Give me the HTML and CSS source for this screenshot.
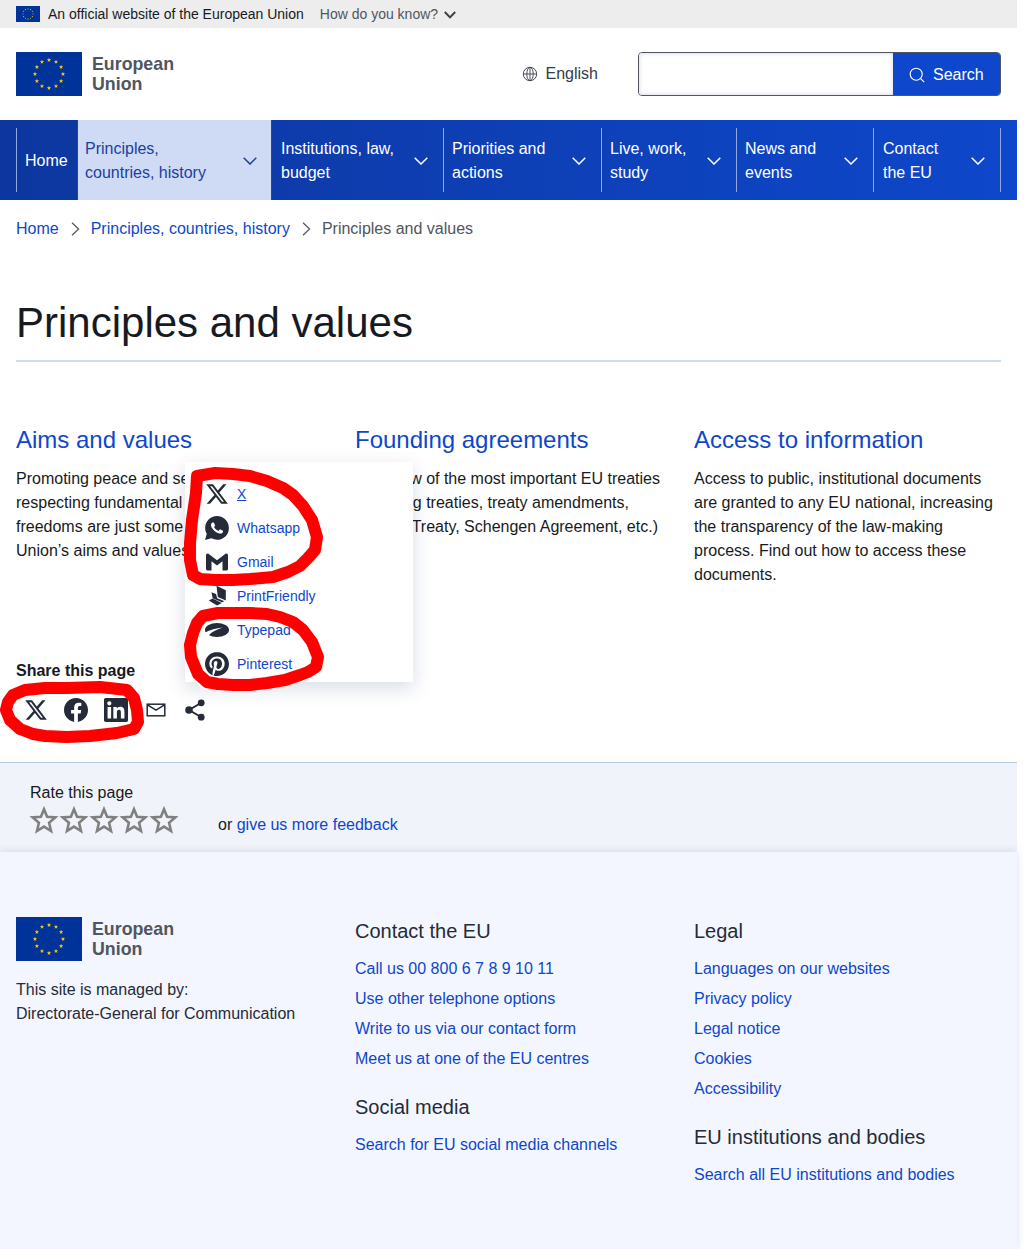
FILE: index.html
```html
<!DOCTYPE html>
<html lang="en">
<head>
<meta charset="utf-8">
<title>Principles and values</title>
<link rel="stylesheet" href="styles.css">
</head>
<body>
<svg class="defs" aria-hidden="true">
  <defs>
    <polygon id="st" points="0,-2.3 .55,-.72 2.2,-.72 .88,.28 1.36,1.88 0,.92 -1.36,1.88 -.88,.28 -2.2,-.72 -.55,-.72"/>
    <symbol id="flag" viewBox="0 0 66 44">
      <rect width="66" height="44" fill="#003399"/>
      <g fill="#ffcc00">
        <use href="#st" x="33" y="8"/><use href="#st" x="40" y="9.9"/><use href="#st" x="45.1" y="15"/><use href="#st" x="47" y="22"/>
        <use href="#st" x="45.1" y="29"/><use href="#st" x="40" y="34.1"/><use href="#st" x="33" y="36"/><use href="#st" x="26" y="34.1"/>
        <use href="#st" x="20.9" y="29"/><use href="#st" x="19" y="22"/><use href="#st" x="20.9" y="15"/><use href="#st" x="26" y="9.9"/>
      </g>
    </symbol>
    <symbol id="chev" viewBox="0 0 14 8"><path d="M.7.7 7 7 13.3.7" fill="none" stroke="currentColor" stroke-width="1.5"/></symbol>
    <symbol id="x" viewBox="0 0 24 24"><path d="M18.244 2.25h3.308l-7.227 8.26 8.502 11.24H16.17l-5.214-6.817L4.99 21.75H1.68l7.73-8.835L1.254 2.25H8.08l4.713 6.231zm-1.161 17.52h1.833L7.084 4.126H5.117z"/></symbol>
    <symbol id="star" viewBox="0 0 28 28"><path d="M14 3.2 17.1 10.7 25.4 11.4 19.1 16.8 21 25 14 20.6 7 25 8.9 16.8 2.6 11.4 10.9 10.7Z" fill="none" stroke="#808080" stroke-width="2.6" stroke-linejoin="miter"/></symbol>
  </defs>
</svg>
<div class="page">
  <div class="topbar">
    <svg class="topflag"><use href="#flag"/></svg>
    <span class="official">An official website of the European Union</span>
    <span class="know">How do you know?</span>
    <svg class="knowchev" viewBox="0 0 12 8" fill="none" stroke="#404040" stroke-width="2"><path d="M.8 1 6 6.4 11.2 1"/></svg>
  </div>

  <header class="header">
    <a class="logo" href="#">
      <svg class="logoflag"><use href="#flag"/></svg>
      <span class="logotext">European<br>Union</span>
    </a>
    <div class="lang">
      <svg class="globe" viewBox="0 0 16 16" fill="none" stroke="#404753" stroke-width=".95"><circle cx="8" cy="8" r="6.7"/><ellipse cx="8" cy="8" rx="3.2" ry="6.7"/><path d="M8 1.3v13.4M1.3 8h13.4"/></svg>
      <span>English</span>
    </div>
    <form class="search">
      <div class="searchinput"></div>
      <div class="searchbtn">
        <svg class="searchicon" viewBox="0 0 16 16" fill="none" stroke="#fff" stroke-width="1.1"><circle cx="7.2" cy="7.2" r="6"/><path d="m11.6 11.6 3.6 3.6"/></svg>
        <span>Search</span>
      </div>
    </form>
  </header>

  <nav class="nav">
    <a class="item w-home" href="#"><span>Home</span></a>
    <a class="item active w-prin" href="#"><span>Principles,<br>countries, history</span><svg class="chev"><use href="#chev"/></svg></a>
    <a class="item noline w-inst" href="#"><span>Institutions, law,<br>budget</span><svg class="chev"><use href="#chev"/></svg></a>
    <a class="item w-prio" href="#"><span>Priorities and<br>actions</span><svg class="chev"><use href="#chev"/></svg></a>
    <a class="item w-live" href="#"><span>Live, work,<br>study</span><svg class="chev"><use href="#chev"/></svg></a>
    <a class="item w-news" href="#"><span>News and<br>events</span><svg class="chev"><use href="#chev"/></svg></a>
    <a class="item last w-cont" href="#"><span>Contact<br>the EU</span><svg class="chev"><use href="#chev"/></svg></a>
  </nav>

  <div class="crumbs">
    <a href="#">Home</a>
    <svg class="crumbsep" viewBox="0 0 9 14" fill="none" stroke="#515560" stroke-width="1.2"><path d="m1 .8 6.6 6.2L1 13.2"/></svg>
    <a href="#">Principles, countries, history</a>
    <svg class="crumbsep" viewBox="0 0 9 14" fill="none" stroke="#515560" stroke-width="1.2"><path d="m1 .8 6.6 6.2L1 13.2"/></svg>
    <span class="crumbcur">Principles and values</span>
  </div>

  <main class="main">
    <h1 class="title">Principles and values</h1>
    <div class="cols">
      <section class="col">
        <h2 class="colhead"><a href="#">Aims and values</a></h2>
        <p>Promoting peace and security,<br>respecting fundamental rights and<br>freedoms are just some of the European<br>Union’s aims and values.</p>
      </section>
      <section class="col">
        <h2 class="colhead"><a href="#">Founding agreements</a></h2>
        <p>Overview of the most important EU treaties (founding treaties, treaty amendments, (Lisbon Treaty, Schengen Agreement, etc.)</p>
      </section>
      <section class="col">
        <h2 class="colhead"><a href="#">Access to information</a></h2>
        <p>Access to public, institutional documents are granted to any EU national, increasing the transparency of the law-making process. Find out how to access these documents.</p>
      </section>
    </div>

    <div class="share">
      <div class="sharetitle">Share this page</div>
      <div class="sharerow">
        <svg class="si si-x"><use href="#x"/></svg>
        <svg class="si" viewBox="0 0 24 24"><path d="M24 12.073c0-6.627-5.373-12-12-12s-12 5.373-12 12c0 5.99 4.388 10.954 10.125 11.854v-8.385H7.078v-3.47h3.047V9.43c0-3.007 1.792-4.669 4.533-4.669 1.312 0 2.686.235 2.686.235v2.953H15.83c-1.491 0-1.956.925-1.956 1.874v2.25h3.328l-.532 3.47h-2.796v8.385C19.612 23.027 24 18.062 24 12.073z"/></svg>
        <svg class="si" viewBox="0 0 24 24"><path d="M20.447 20.452h-3.554v-5.569c0-1.328-.027-3.037-1.852-3.037-1.853 0-2.136 1.445-2.136 2.939v5.667H9.351V9h3.414v1.561h.046c.477-.9 1.637-1.85 3.37-1.85 3.601 0 4.267 2.37 4.267 5.455v6.286zM5.337 7.433c-1.144 0-2.063-.926-2.063-2.065 0-1.138.92-2.063 2.063-2.063 1.14 0 2.064.925 2.064 2.063 0 1.139-.925 2.065-2.064 2.065zm1.782 13.019H3.555V9h3.564v11.452zM22.225 0H1.771C.792 0 0 .774 0 1.729v20.542C0 23.227.792 24 1.771 24h20.451C23.2 24 24 23.227 24 22.271V1.729C24 .774 23.2 0 22.222 0h.003z"/></svg>
        <svg class="si si-mail" viewBox="0 0 20 16"><rect x="1.2" y="2.2" width="17.6" height="11.6"/><path d="m1.5 2.8 8.5 5.4 8.5-5.4"/></svg>
        <svg class="si si-share" viewBox="0 0 20 24"><path class="shareline" d="M16 5 4 12l12 7"/><circle cx="16.2" cy="4.8" r="3.4"/><circle cx="4" cy="12" r="3.8"/><circle cx="16.2" cy="19.2" r="3.4"/></svg>

        <div class="popup">
          <a class="pop" href="#"><svg class="pi"><use href="#x"/></svg><span class="ul">X</span></a>
          <a class="pop" href="#"><svg class="pi" viewBox="0 0 24 24"><path d="M12 0C5.4 0 .16 5.34.16 11.9c0 2.1.55 4.14 1.59 5.94L.06 24l6.3-1.65a11.9 11.9 0 0 0 5.64 1.44c6.55 0 11.9-5.33 11.9-11.9C23.9 5.33 18.55 0 12 0z"/><path class="wa" d="M17.47 14.38c-.3-.15-1.76-.87-2.03-.97-.27-.1-.47-.15-.67.15-.2.3-.77.97-.94 1.16-.17.2-.35.22-.64.08-.3-.15-1.26-.47-2.4-1.48-.88-.79-1.48-1.76-1.65-2.06-.17-.3-.02-.46.13-.6.13-.14.3-.35.45-.52.15-.18.2-.3.3-.5.1-.2.05-.37-.03-.52-.07-.15-.67-1.61-.91-2.21-.25-.58-.49-.5-.67-.51h-.57c-.2 0-.52.07-.8.37-.27.3-1.04 1.02-1.04 2.48 0 1.46 1.07 2.88 1.21 3.07.15.2 2.1 3.2 5.08 4.49.71.3 1.26.49 1.7.63.71.22 1.36.19 1.87.12.57-.09 1.76-.72 2-1.42.25-.69.25-1.29.18-1.41-.08-.12-.28-.2-.57-.35z"/></svg><span>Whatsapp</span></a>
          <a class="pop" href="#"><svg class="pi" viewBox="0 0 24 24"><path d="M1 5.4c0-1.5 1.6-2.3 2.8-1.4L12 10.2 20.2 4c1.2-.9 2.8-.1 2.8 1.4V19a1.4 1.4 0 0 1-1.4 1.4H17.5V11.2L12 15.4l-5.5-4.2v9.200H2.400A1.400 1.400 0 0 1 1 19z"/></svg><span>Gmail</span></a>
          <a class="pop" href="#"><svg class="pi" viewBox="0 0 24 24"><path d="M11.5 1.8l9.300 4.500v10.200l-8-3.400zM6.500 8.300l4.500 1.600 1.200 4.300 7.200 3-2.400 1-9.300-4zM3.800 16.500l3.800-1.900 9.200 4.300-4.700 2.600z"/></svg><span>PrintFriendly</span></a>
          <a class="pop" href="#"><svg class="pi" viewBox="0 0 24 24"><ellipse cx="12" cy="12" rx="12" ry="7"/><path class="wa" d="M0 14.600C5 12 11 10.400 18 9.600 12 11.600 7 13.800 3.600 17.400 2 16.600 .8 15.800 0 14.600z"/></svg><span>Typepad</span></a>
          <a class="pop" href="#"><svg class="pi" viewBox="0 0 24 24"><path d="M12.017 0C5.396 0 .029 5.367.029 11.987c0 5.079 3.158 9.417 7.618 11.162-.105-.949-.199-2.403.041-3.439.219-.937 1.406-5.957 1.406-5.957s-.359-.72-.359-1.781c0-1.663.967-2.911 2.168-2.911 1.024 0 1.518.769 1.518 1.688 0 1.029-.653 2.567-.992 3.992-.285 1.193.6 2.165 1.775 2.165 2.128 0 3.768-2.245 3.768-5.487 0-2.861-2.063-4.869-5.008-4.869-3.41 0-5.409 2.562-5.409 5.199 0 1.033.394 2.143.889 2.741.099.12.112.225.085.345-.09.375-.293 1.199-.334 1.363-.053.225-.172.271-.401.165-1.495-.69-2.433-2.878-2.433-4.646 0-3.776 2.748-7.252 7.920-7.252 4.158 0 7.392 2.967 7.392 6.923 0 4.135-2.607 7.462-6.233 7.462-1.214 0-2.354-.629-2.758-1.379l-.749 2.848c-.269 1.045-1.004 2.352-1.498 3.146 1.123.345 2.306.535 3.550.535 6.607 0 11.985-5.365 11.985-11.987C23.970 5.390 18.592.026 11.985.026L12.017 0z"/></svg><span>Pinterest</span></a>
          <div class="arrow"></div>
        </div>
      </div>
    </div>
  </main>

  <section class="rate">
    <div class="ratetitle">Rate this page</div>
    <div class="raterow">
      <div class="stars">
        <svg class="rstar"><use href="#star"/></svg>
        <svg class="rstar"><use href="#star"/></svg>
        <svg class="rstar"><use href="#star"/></svg>
        <svg class="rstar"><use href="#star"/></svg>
        <svg class="rstar"><use href="#star"/></svg>
      </div>
      <div class="ratetext">or <a href="#">give us more feedback</a></div>
    </div>
  </section>

  <footer class="footer">
    <div class="fcol">
      <a class="logo" href="#">
        <svg class="logoflag"><use href="#flag"/></svg>
        <span class="logotext">European<br>Union</span>
      </a>
      <p class="managed">This site is managed by:<br>Directorate-General for Communication</p>
    </div>
    <div class="fcol">
      <h3 class="fhead">Contact the EU</h3>
      <ul class="flinks">
        <li><a href="#">Call us 00 800 6 7 8 9 10 11</a></li>
        <li><a href="#">Use other telephone options</a></li>
        <li><a href="#">Write to us via our contact form</a></li>
        <li><a href="#">Meet us at one of the EU centres</a></li>
      </ul>
      <h3 class="fhead second">Social media</h3>
      <ul class="flinks">
        <li><a href="#">Search for EU social media channels</a></li>
      </ul>
    </div>
    <div class="fcol">
      <h3 class="fhead">Legal</h3>
      <ul class="flinks">
        <li><a href="#">Languages on our websites</a></li>
        <li><a href="#">Privacy policy</a></li>
        <li><a href="#">Legal notice</a></li>
        <li><a href="#">Cookies</a></li>
        <li><a href="#">Accessibility</a></li>
      </ul>
      <h3 class="fhead second">EU institutions and bodies</h3>
      <ul class="flinks">
        <li><a href="#">Search all EU institutions and bodies</a></li>
      </ul>
    </div>
  </footer>

  <svg class="scribbles" viewBox="0 0 1017 1249" fill="none" stroke="#ff0000" stroke-width="12" stroke-linecap="round" stroke-linejoin="round" aria-hidden="true">
    <polygon points="197,476 215,473 233,474 250,476 267,481 283,488 293,495 303,506 312,520 317,537 315,550 308,558 300,566 288,572 273,577 250,579 233,580 215,580 200,579 193,575 190,560 190,543 192,520 196,493"/>
    <polygon points="203,616 218,613 233,613 250,613 267,614 280,617 293,622 303,630 312,642 318,657 316,667 308,672 300,675 285,680 267,683 250,685 233,685 218,684 207,682 198,674 191,657 190,645 193,633 197,623"/>
    <polygon points="13,695 25,690 45,688 67,688 100,687 127,690 134,698 137,710 138,722 134,729 117,733 90,736 67,737 45,736 33,734 20,729 10,720 6,710 8,702"/>
  </svg>
</div>
</body>
</html>
```

FILE: styles.css
```css
* { box-sizing: border-box; }
html, body { margin: 0; padding: 0; background: #fff; }
body { font-family: "Liberation Sans", Arial, sans-serif; font-size: 16px; line-height: 24px; color: #171a22; overflow: hidden; }
a { color: #0e47cb; text-decoration: none; }
p { margin: 0; }
ul { list-style: none; margin: 0; padding: 0; }
h1, h2, h3 { font-weight: 400; margin: 0; }
svg { display: block; flex: none; }
.defs { position: absolute; width: 0; height: 0; }

.page { position: relative; width: 1017px; height: 1249px; }

.topbar { height: 28px; background: #ededed; display: flex; align-items: center; padding-left: 16px; font-size: 14px; }
.topflag { width: 24px; height: 16px; }
.official { margin-left: 8px; color: #171a22; }
.know { margin-left: 16px; color: #515560; }
.knowchev { width: 12px; height: 8px; margin-left: 6px; margin-top: 2px; }

.header { height: 92px; display: flex; align-items: center; padding: 0 16px; }
.logo { display: flex; align-items: center; }
.logoflag { width: 66px; height: 44px; }
.logotext { margin-left: 10px; font-size: 17.8px; line-height: 20px; font-weight: 700; color: #515560; }
.lang { display: flex; align-items: center; margin-left: auto; color: #323b4a; }
.globe { width: 16px; height: 16px; margin-right: 8px; }
.search { flex: none; display: flex; margin-left: 40px; width: 363px; height: 44px; border: 1px solid #515560; border-radius: 4px; overflow: hidden; }
.searchinput { width: 254px; background: #fff; box-shadow: inset 0 0 4px rgba(80, 100, 160, .3); }
.searchbtn { flex: 1; background: #0e47cb; color: #fff; display: flex; align-items: center; padding-left: 16px; padding-top: 2px; }
.searchicon { width: 16px; height: 16px; margin-right: 8px; }

.nav { height: 80px; display: flex; align-items: center; padding-left: 16px; background: linear-gradient(90deg, #0d379f, #0e47cb); }
.item { height: 64px; display: flex; align-items: center; justify-content: space-between; border-left: 1px solid #8fa8e0; padding: 0 15px 0 8px; color: #fff; flex: none; }
.item span { padding-top: 2px; }
.chev { width: 14px; height: 8px; margin-top: 2px; color: inherit; }
.active { height: 80px; background: #cfdaf5; color: #1c3f9f; border-left: 1px solid #0e47cb; border-right: 1px solid #0e47cb; padding: 0 14px 0 7px; }
.noline { border-left: 0; padding-left: 9px; }
.last { border-right: 1px solid #8fa8e0; }
.w-home { width: 61px; }
.w-prin { width: 195px; }
.w-inst { width: 171px; }
.w-prio { width: 158px; }
.w-live { width: 135px; }
.w-news { width: 137px; }
.w-cont { width: 128px; padding-left: 9px; }

.crumbs { display: flex; align-items: center; padding: 18px 16px 0; height: 40px; }
.crumbsep { width: 9px; height: 14px; margin: 0 11px 0 12px; }
.crumbcur { color: #515560; }

.main { padding: 0 16px; }
.title { font-size: 42px; line-height: 48px; margin-top: 59px; padding-bottom: 13px; border-bottom: 2px solid #cfdcef; color: #171a22; }
.cols { display: grid; grid-template-columns: repeat(3, 307px); gap: 32px; margin-top: 62px; height: 235px; }
.colhead { font-size: 24px; line-height: 32px; margin-bottom: 11px; }
.share { margin-top: 0; }
.sharetitle { font-weight: 700; color: #171a22; }
.sharerow { position: relative; display: flex; align-items: center; height: 24px; margin-top: 15px; padding-left: 8px; margin-bottom: 40px; }
.si { width: 24px; height: 24px; margin-right: 16px; fill: #252b38; }
.si-mail { width: 20px; height: 16px; margin: 0 19px 0 2px; fill: none; stroke: #252b38; stroke-width: 1.5; }
.si-share { width: 20px; height: 24px; margin: 0; }
.shareline { fill: none; stroke: #252b38; stroke-width: 2; }

.popup { position: absolute; left: 169px; bottom: 40px; width: 228px; height: 220px; background: #fff; padding: 15px 20px 0; box-shadow: 0 6px 18px rgba(40, 60, 110, .18); }
.pop { display: flex; align-items: center; height: 34px; font-size: 14px; }
.pi { width: 24px; height: 24px; margin-right: 8px; fill: #252b38; }
.wa { fill: #fff; }
.ul { text-decoration: underline; }
.arrow { position: absolute; left: 13px; bottom: -6px; width: 12px; height: 12px; background: #fff; transform: rotate(45deg); }

.rate { height: 90px; border-top: 1px solid #b8cce6; background: #f0f3f9; padding: 18px 30px 0; }
.ratetitle { color: #171a22; }
.raterow { display: flex; align-items: flex-start; }
.stars { display: flex; width: 150px; margin-left: -1px; margin-top: 1px; }
.rstar { width: 30px; height: 28px; }
.ratetext { margin-left: 39px; margin-top: 8px; }

.footer { height: 397px; background: #f3f6fe; display: grid; grid-template-columns: repeat(3, 307px); gap: 32px; padding: 65px 16px 0; box-shadow: 0 0 8px rgba(60, 90, 150, .2); position: relative; }
.managed { margin-top: 17px; color: #252b38; }
.fhead { font-size: 20px; line-height: 28px; color: #252b38; }
.second { margin-top: 22px; }
.flinks { margin-top: 12px; display: flex; flex-direction: column; gap: 6px; }

.scribbles { position: absolute; left: 0; top: 0; width: 1017px; height: 1249px; pointer-events: none; }
```
